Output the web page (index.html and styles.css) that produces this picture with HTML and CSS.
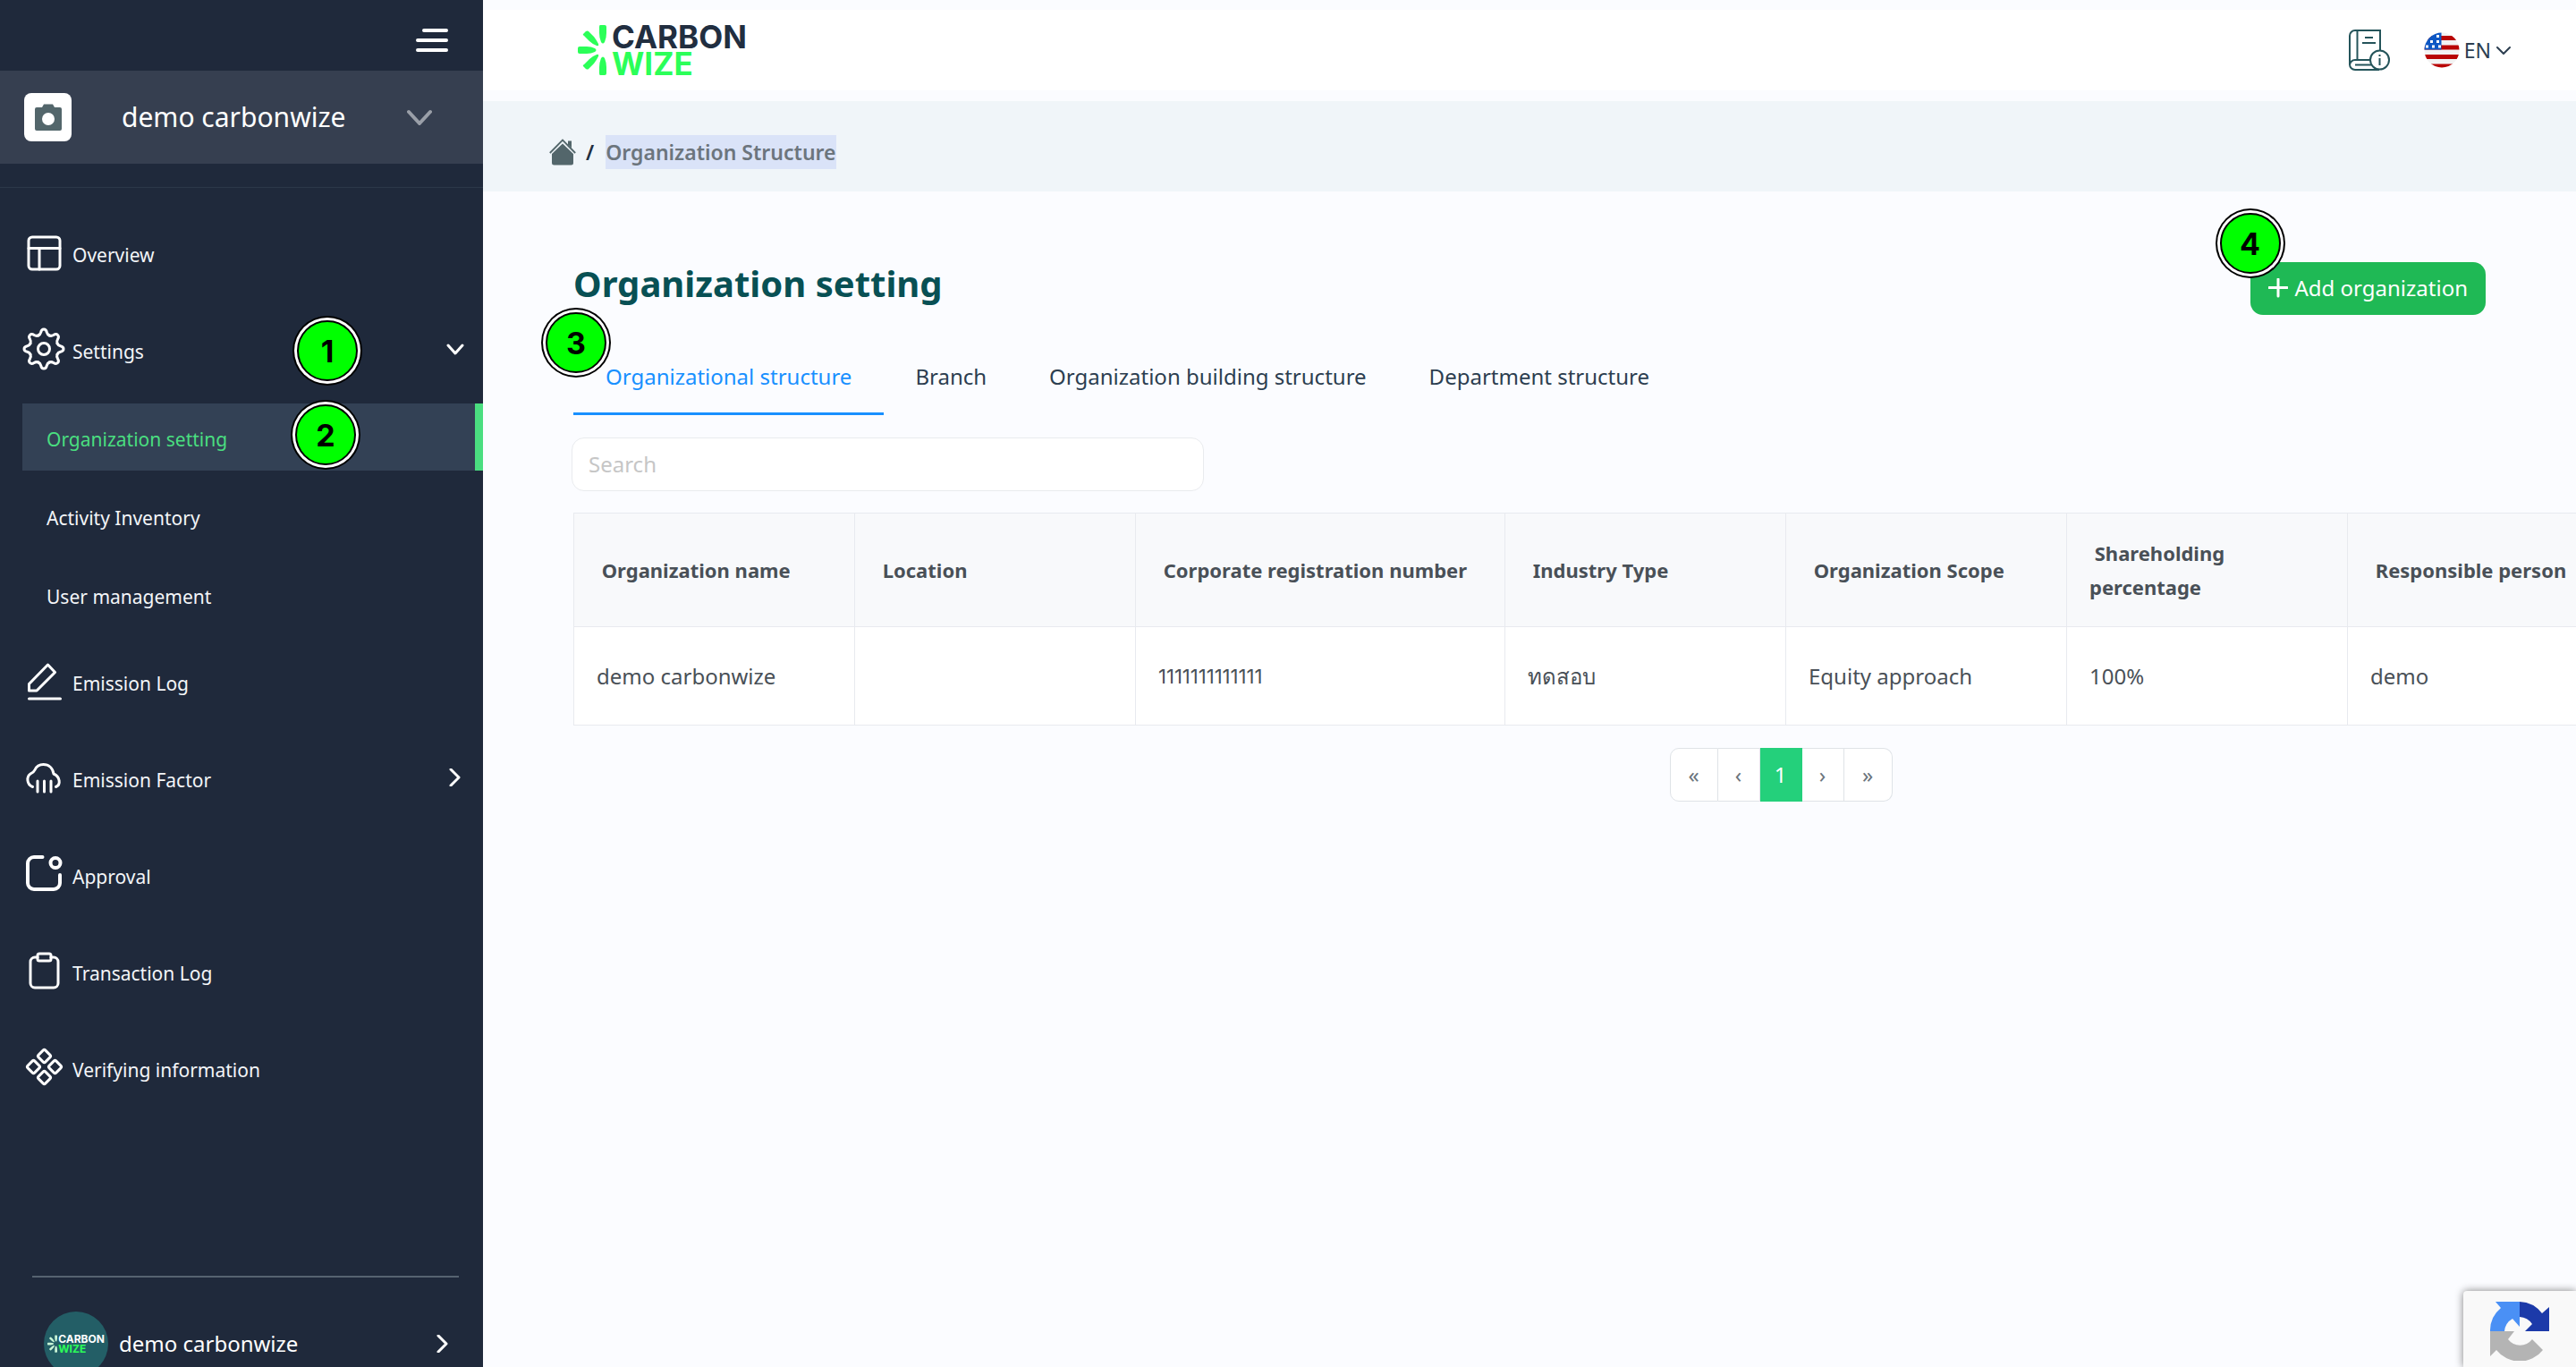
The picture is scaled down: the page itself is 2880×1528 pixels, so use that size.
FILE: index.html
```html
<!DOCTYPE html>
<html lang="en">
<head>
<meta charset="utf-8">
<meta name="viewport" content="width=device-width, initial-scale=1">
<title>Organization setting - Carbonwize</title>
<link rel="stylesheet" href="styles.css">
</head>
<body>
<div class="app">
  <aside class="sidebar">
    <div class="sidebar-top">
      <button class="icon-button" type="button" aria-label="Toggle menu">
        <svg width="36" height="28" viewBox="0 0 36 28" fill="none" stroke="currentColor" stroke-width="4" stroke-linecap="round"><path d="M9 3h25M2 14h32M2 25h32"/></svg>
      </button>
    </div>
    <button class="org-switch" type="button">
      <span class="org-photo">
        <svg width="30" height="30" viewBox="0 0 30 30"><path fill="#53666b" fill-rule="evenodd" d="M2 4h6l2-3.500h10L22 4h6a2 2 0 0 1 2 2v22a2 2 0 0 1-2 2H2a2 2 0 0 1-2-2V6a2 2 0 0 1 2-2ZM15 10a7 7 0 1 0 0 14a7 7 0 0 0 0-14Z"/></svg>
      </span>
      <span class="org-name">demo carbonwize</span>
      <svg class="org-chevron" width="28" height="18" viewBox="0 0 28 18" fill="none" stroke="currentColor" stroke-width="4" stroke-linecap="round" stroke-linejoin="round"><path d="M2 3l12 13L26 3"/></svg>
    </button>
    <nav class="nav">
      <a class="nav-item" href="#">
        <svg class="nav-icon" viewBox="0 0 48 48"><rect x="7" y="7" width="35" height="36" rx="4"/><path d="M7 19.500h35M19 19.500V43"/></svg>
        <span>Overview</span>
      </a>
      <a class="nav-item" href="#">
        <svg class="nav-icon" viewBox="-24 -24 48 48">
          <defs><path id="tooth" d="M-6.200-15C-4.300-15.800-3.700-17-3.300-18.600C-2.600-22-.8-22 0-22C.8-22 2.600-22 3.300-18.600C3.700-17 4.300-15.800 6.200-15"/></defs>
          <use href="#tooth"/><use href="#tooth" transform="rotate(45)"/><use href="#tooth" transform="rotate(90)"/><use href="#tooth" transform="rotate(135)"/><use href="#tooth" transform="rotate(180)"/><use href="#tooth" transform="rotate(225)"/><use href="#tooth" transform="rotate(270)"/><use href="#tooth" transform="rotate(315)"/>
          <circle r="6.500"/>
        </svg>
        <span>Settings</span>
        <svg class="nav-chevron" width="20" height="20" viewBox="0 0 20 20"><path d="M2 6l8 9 8-9"/></svg>
        <b class="step step-1">1</b>
      </a>
      <div class="subnav">
        <a class="subnav-item active" href="#" aria-current="page">Organization setting<b class="step step-2">2</b></a>
        <a class="subnav-item" href="#">Activity Inventory</a>
        <a class="subnav-item" href="#">User management</a>
      </div>
      <a class="nav-item" href="#">
        <svg class="nav-icon" viewBox="0 0 48 48"><path d="M7.500 27.500 28.500 6l8 8.500L16 35H7.500ZM7.500 44h35"/></svg>
        <span>Emission Log</span>
      </a>
      <a class="nav-item" href="#">
        <svg class="nav-icon" viewBox="0 0 48 48"><path d="M11.500 34.500C4.500 32 4.500 23 9 20c3-1.500 4-2 5-4.500C16 11 19 9.500 23.500 9.500c6 0 10.500 4 11.500 10.500c7 3 8.500 12 2.500 14.500M17 28v12M24.500 28v12M32 28v12"/></svg>
        <span>Emission Factor</span>
        <svg class="nav-chevron" width="20" height="20" viewBox="0 0 20 20"><path d="M5 1l9 9-9 9"/></svg>
      </a>
      <a class="nav-item" href="#">
        <svg class="nav-icon bold" viewBox="0 0 48 48"><path d="M22.500 5H13a7 7 0 0 0-7 7v22a7 7 0 0 0 7 7h22a7 7 0 0 0 7-7V25"/><circle cx="37" cy="11.500" r="5.500"/></svg>
        <span>Approval</span>
      </a>
      <a class="nav-item" href="#">
        <svg class="nav-icon" viewBox="0 0 48 48"><path d="M17 9h-3a5 5 0 0 0-5 5v24a5 5 0 0 0 5 5h21a5 5 0 0 0 5-5V14a5 5 0 0 0-5-5h-3"/><rect x="17" y="5" width="15" height="8" rx="2"/></svg>
        <span>Transaction Log</span>
      </a>
      <a class="nav-item" href="#">
        <svg class="nav-icon" viewBox="0 0 48 48"><g transform="translate(24.500 23.500) rotate(45)"><rect x="-14" y="-14" width="11" height="11" rx="2"/><rect x="3" y="-14" width="11" height="11" rx="2"/><rect x="-14" y="3" width="11" height="11" rx="2"/><rect x="3" y="3" width="11" height="11" rx="2"/></g></svg>
        <span>Verifying information</span>
      </a>
    </nav>
    <button class="account" type="button">
      <span class="account-logo">
        <svg width="11" height="20" viewBox="0 0 32 56"><use href="#burst" fill="#c9f5d6"/></svg>
        <span class="account-word">CARBON<br><em>WIZE</em></span>
      </span>
      <span>demo carbonwize</span>
      <svg class="account-chevron" width="20" height="20" viewBox="0 0 20 20"><path d="M7 1l9 9-9 9"/></svg>
    </button>
  </aside>

  <div class="page">
    <header class="header">
      <a class="logo" href="#" aria-label="Carbonwize">
        <svg width="32" height="56" viewBox="0 0 32 56">
          <g id="burst"><path d="M25 0h5q2 0 2 2v7q0 5-2 10q-2 3-4 0q-2-5-2-10V2q0-2 1-2Z"/><path d="M25 56h5q2 0 2-2v-7q0-5-2-10q-2-3-4 0q-2 5-2 10v7q0 2 1 2Z"/><path d="M2 24h8q5 0 9 2q3 2 0 4q-4 2-9 2H2q-2 0-2-2v-4q0-2 2-2Z"/><path d="M6 10l3-3q2-1 3 0l6 6q3 4 5 8q1 3-2 2q-5-2-8-5l-6-6q-2-1-1-2Z"/><path d="M6 46l3 3q2 1 3 0l6-6q3-4 5-8q1-3-2-2q-5 2-8 5l-6 6q-2 1-1 2Z"/></g>
        </svg>
        <span class="logo-word">CARBON<br><em>WIZE</em></span>
      </a>
      <div class="tools">
        <button class="icon-button" type="button" aria-label="User guide">
          <svg width="46" height="46" viewBox="0 0 46 46" fill="none" stroke="#24545a" stroke-width="2"><path d="M35 23V1H7a6 6 0 0 0-6 6v32a6 6 0 0 0 6 6h27M9.500 1v33M1 40a6 6 0 0 1 6-6h17M7 39.500h18M18 9h9M15 15h15"/><circle cx="34.500" cy="34" r="10.500"/><path d="M34.500 32v8M34.500 28v2"/></svg>
        </button>
        <button class="language" type="button">
          <svg width="40" height="40" viewBox="0 0 40 40">
            <clipPath id="round"><circle cx="20" cy="20" r="19.500"/></clipPath>
            <g clip-path="url(#round)"><path fill="#f3f3f3" d="M0 0h40v40H0z"/><path fill="#b90504" d="M0 4h40v5H0zM0 14.500h40v5H0zM0 25h40v5H0zM0 35.500h40v5H0z"/><path fill="#0d57c4" d="M0 0h19.500v19.500H0z"/></g>
            <path stroke="#fff" stroke-width="3" stroke-dasharray="3 4" d="M14 4.500h4M7 10.500h12M2 16h17"/>
          </svg>
          <span class="language-name">EN</span>
          <svg width="18" height="12" viewBox="0 0 18 12" fill="none" stroke="currentColor" stroke-width="2" stroke-linecap="round" stroke-linejoin="round"><path d="M2 3l7 7 7-7"/></svg>
        </button>
      </div>
    </header>

    <div class="breadcrumb">
      <a class="home" href="#" aria-label="Home">
        <svg width="30" height="30" viewBox="0 0 30 30"><path fill="#53666b" d="M15 5.500 27 17v10a2.500 2.500 0 0 1-2.500 2.500h-19A2.500 2.500 0 0 1 3 27V17Z"/><path fill="none" stroke="#53666b" stroke-width="1.800" d="M.8 16 15 1.500 29.200 16"/><path fill="#53666b" d="M21 2.500h4v8l-4-4Z"/></svg>
      </a>
      <span class="slash">/</span>
      <mark>Organization Structure</mark>
    </div>

    <main class="content">
      <div class="title-row">
        <h1>Organization setting</h1>
        <button class="add" type="button">
          <svg width="22" height="22" viewBox="0 0 22 22" fill="none" stroke="currentColor" stroke-width="3" stroke-linecap="round"><path d="M11 1v19M1 10.500h20"/></svg>
          <span>Add organization</span>
          <b class="step step-4">4</b>
        </button>
      </div>
      <div class="tabs" role="tablist">
        <button class="tab active" type="button" role="tab" aria-selected="true">Organizational structure<b class="step step-3">3</b></button>
        <button class="tab" type="button" role="tab">Branch</button>
        <button class="tab" type="button" role="tab">Organization building structure</button>
        <button class="tab" type="button" role="tab">Department structure</button>
      </div>
      <input class="search" type="search" placeholder="Search" aria-label="Search">
      <div class="table-scroll">
        <div class="table-inner">
          <table>
            <colgroup><col class="col"><col class="col"><col class="col-wide"><col class="col"><col class="col"><col class="col"><col class="col-last"></colgroup>
            <thead>
              <tr><th>&nbsp;Organization name</th><th>&nbsp;Location</th><th>&nbsp;Corporate registration number</th><th>&nbsp;Industry Type</th><th>&nbsp;Organization Scope</th><th>&nbsp;Shareholding<br>percentage</th><th>&nbsp;Responsible person</th></tr>
            </thead>
            <tbody>
              <tr><td>demo carbonwize</td><td></td><td class="number">1111111111111</td><td lang="th">ทดสอบ</td><td>Equity approach</td><td>100%</td><td>demo</td></tr>
            </tbody>
          </table>
          <nav class="pager" aria-label="Pages">
            <button type="button">«</button><button type="button">‹</button><button class="current" type="button">1</button><button type="button">›</button><button type="button">»</button>
          </nav>
        </div>
      </div>
    </main>
  </div>

  <div class="captcha">
    <svg width="66" height="66" viewBox="0 0 66 66"><path fill="#4a90f5" d="M6 0h27v28l-8-9a18 18 0 0 0-9 14H0A33 33 0 0 1 12 7Z"/><path fill="#1c3aa9" d="M33 0a33 33 0 0 1 25 13l8-7v27H39l8-8a18 18 0 0 0-14-8Z"/><path fill="#b4b4b4" d="M0 33h27l-7 9a17 17 0 0 0 27 0l12 12a33 33 0 0 1-52 0l-7 7Z"/></svg>
  </div>
</div>
</body>
</html>
```
FILE: styles.css
```css
* { box-sizing: border-box; }
body {
  margin: 0;
  background: #fbfcff;
  color: #2c3e50;
  font: 24px/38px "Noto Sans", "Open Sans", sans-serif;
}
button {
  border: 0;
  padding: 0;
  background: none;
  color: inherit;
  font: inherit;
  cursor: pointer;
}
a { color: inherit; text-decoration: none; }
svg { display: block; flex: none; }

.app { display: flex; height: 100vh; overflow: hidden; }

/* Sidebar */
.sidebar {
  flex: none;
  width: 540px;
  display: flex;
  flex-direction: column;
  background: #1f293b;
  color: #fff;
}
.sidebar-top {
  flex: none;
  display: flex;
  justify-content: flex-end;
  align-items: center;
  height: 79px;
  padding: 10px 39px 0 0;
}
.org-switch {
  flex: none;
  display: flex;
  align-items: center;
  height: 104px;
  padding: 0 57px 0 27px;
  background: #363f50;
  font-size: 30px;
}
.org-photo {
  display: grid;
  place-items: center;
  width: 53px;
  height: 54px;
  border-radius: 8px;
  background: #fff;
}
.org-name { margin-left: 56px; }
.org-chevron { margin-left: auto; color: #9a9fa8; }

.nav {
  flex: none;
  margin-top: 26px;
  padding-top: 21px;
  border-top: 1px solid #2b3848;
  font-size: 21px;
  color: #f3f5f8;
}
.nav-item {
  position: relative;
  display: flex;
  align-items: center;
  gap: 8px;
  height: 108px;
  padding: 0 21px 0 25px;
}
.nav-icon, .nav-chevron, .account-chevron {
  fill: none;
  stroke: #fff;
  stroke-width: 3;
  stroke-linecap: round;
  stroke-linejoin: round;
}
.nav-icon { width: 48px; height: 48px; margin-bottom: 6px; }
.nav-icon.bold { stroke-width: 4; }
.nav-chevron { margin-left: auto; margin-bottom: 6px; }
.subnav {
  display: flex;
  flex-direction: column;
  gap: 13px;
  margin: 4px 0 8px 25px;
}
.subnav-item {
  position: relative;
  display: flex;
  align-items: center;
  height: 75px;
  padding: 4px 0 0 27px;
}
.subnav-item.active {
  border-right: 9px solid #4ade80;
  background: #334155;
  color: #4ade80;
}
.account {
  flex: none;
  display: flex;
  align-items: center;
  gap: 12px;
  margin: 176px 27px 0 36px;
  padding: 38px 10px 0 13px;
  border-top: 2px solid #566270;
}
.account-logo {
  display: flex;
  align-items: center;
  justify-content: center;
  gap: 1px;
  width: 72px;
  height: 72px;
  border-radius: 50%;
  background: #235e66;
}
.account-word {
  font: 700 12px/11px Inter, sans-serif;
  text-align: left;
}
.account-word em { color: #2bff58; font-style: normal; }
.account-chevron { margin-left: auto; }

/* Numbered step markers */
.step {
  position: absolute;
  z-index: 1;
  width: 68px;
  height: 68px;
  border: 2px solid #000;
  border-radius: 50%;
  background: #0f0;
  box-shadow: 0 0 0 3px #fff, 0 0 0 5px #000;
  color: #000;
  font: 700 34px/66px Inter, sans-serif;
  text-align: center;
}
.step-1 { left: 332px; top: 19px; }
.step-2 { left: 305px; top: 1px; }
.step-3 { left: -31px; top: -34px; }
.step-4 { left: -34px; top: -55px; }

/* Header */
.page { flex: 1; min-width: 0; }
.header {
  display: flex;
  justify-content: space-between;
  align-items: center;
  height: 90px;
  margin: 11px 0 12px;
  padding: 0 72px 0 106px;
  background: #fff;
}
.logo { display: flex; align-items: center; gap: 6px; fill: #2bff58; }
.logo-word {
  color: #212e40;
  font: 700 35px/30px Inter, sans-serif;
}
.logo-word em { color: #2bff58; font-style: normal; }
.tools { display: flex; align-items: center; gap: 38px; }
.language { display: flex; align-items: center; gap: 5px; }
.language-name { font-size: 23px; }
.icon-button { display: block; }

.breadcrumb {
  display: flex;
  align-items: center;
  height: 101px;
  padding: 12px 74px 0;
  background: #f0f5f9;
  font-size: 23px;
  font-weight: 600;
}
.slash { margin: 0 13px 0 11px; color: #212e40; }
.breadcrumb mark { background: #dae3f8; color: #6c757d; }

/* Content */
.content { padding: 79px 0 0 101px; }
.title-row {
  display: flex;
  justify-content: space-between;
  align-items: center;
  height: 59px;
  padding-right: 101px;
}
h1 {
  margin: 0 0 12px;
  color: #085054;
  font-size: 40px;
  line-height: 50px;
}
.add {
  position: relative;
  display: flex;
  align-items: center;
  gap: 8px;
  height: 59px;
  padding: 0 20px 2px;
  border-radius: 14px;
  background: #1fb955;
  color: #fff;
}
.tabs { display: flex; margin-top: 31px; }
.tab {
  position: relative;
  height: 81px;
  padding: 0 35px 5px;
}
.tab.active { padding: 0 36px 2px; border-bottom: 3px solid #1890ff; color: #1890ff; }
.search {
  display: block;
  width: 707px;
  height: 60px;
  margin: 25px 0 24px -2px;
  padding: 0 18px 2px;
  border: 1px solid #e9ebee;
  border-radius: 14px;
  background: #fff;
  color: inherit;
  font: inherit;
}
.search::placeholder { color: #c6c6c6; }

.table-scroll { overflow: hidden; }
.table-inner { width: max-content; }
table {
  width: 2700px;
  table-layout: fixed;
  border-collapse: collapse;
  color: #495057;
}
.col { width: 314px; }
.col-wide { width: 413px; }
th, td {
  padding: 0 25px;
  border: 1px solid #e8eaef;
  text-align: left;
}
th { height: 127px; background: #f8f9fb; font-size: 22px; }
td { height: 110px; background: #fff; }
.number { font-family: Inter, sans-serif; font-size: 22px; }

.pager {
  display: flex;
  justify-content: center;
  margin-top: 25px;
}
.pager button {
  width: 47px;
  height: 60px;
  border: 1px solid #dfe3e7;
  border-left-width: 0;
  background: #fff;
  color: #6c757d;
}
.pager button:first-child { width: 54px; border-left-width: 1px; border-radius: 10px 0 0 10px; }
.pager button:last-child { width: 54px; border-radius: 0 10px 10px 0; }
.pager .current { border-color: #24d07b; background: #24d07b; color: #fff; }

.captcha {
  position: fixed;
  right: 0;
  bottom: 0;
  width: 126px;
  height: 85px;
  padding: 12px 30px;
  border-radius: 4px 0 0 0;
  background: #f9f9f9;
  box-shadow: 0 0 10px #808080;
}
```
